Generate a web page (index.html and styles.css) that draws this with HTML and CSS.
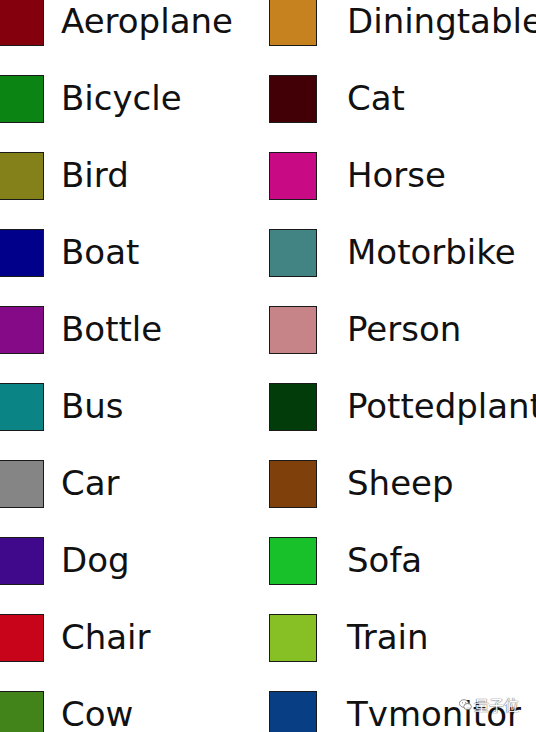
FILE: index.html
```html
<!DOCTYPE html>
<html>
<head>
<meta charset="utf-8">
<link rel="stylesheet" href="styles.css">
</head>
<body>
<div class="legend">
  <span class="sw c-aeroplane"></span><span class="lbl">Aeroplane</span>
  <span class="sw c-diningtable"></span><span class="lbl lbl-r">Diningtable</span>

  <span class="sw c-bicycle"></span><span class="lbl">Bicycle</span>
  <span class="sw c-cat"></span><span class="lbl lbl-r">Cat</span>

  <span class="sw c-bird"></span><span class="lbl">Bird</span>
  <span class="sw c-horse"></span><span class="lbl lbl-r">Horse</span>

  <span class="sw c-boat"></span><span class="lbl">Boat</span>
  <span class="sw c-motorbike"></span><span class="lbl lbl-r">Motorbike</span>

  <span class="sw c-bottle"></span><span class="lbl">Bottle</span>
  <span class="sw c-person"></span><span class="lbl lbl-r">Person</span>

  <span class="sw c-bus"></span><span class="lbl">Bus</span>
  <span class="sw c-pottedplant"></span><span class="lbl lbl-r">Pottedplant</span>

  <span class="sw c-car"></span><span class="lbl">Car</span>
  <span class="sw c-sheep"></span><span class="lbl lbl-r">Sheep</span>

  <span class="sw c-dog"></span><span class="lbl">Dog</span>
  <span class="sw c-sofa"></span><span class="lbl lbl-r">Sofa</span>

  <span class="sw c-chair"></span><span class="lbl">Chair</span>
  <span class="sw c-train"></span><span class="lbl lbl-r">Train</span>

  <span class="sw c-cow"></span><span class="lbl">Cow</span>
  <span class="sw c-tvmonitor"></span><span class="lbl lbl-r">Tvmonitor</span>
</div>
<div class="watermark">
  <svg class="wm-icon" width="13" height="12" viewBox="0 0 13 12">
    <ellipse cx="5" cy="4.5" rx="4.6" ry="3.8" fill="#fff" stroke="#666" stroke-width="0.8"/>
    <ellipse cx="8.6" cy="7.6" rx="3.8" ry="3.1" fill="#fff" stroke="#666" stroke-width="0.8"/>
    <circle cx="3.5" cy="3.8" r="0.6" fill="#666"/>
    <circle cx="6.5" cy="3.8" r="0.6" fill="#666"/>
  </svg>
  <span class="wm-text">量子位</span>
</div>
</body>
</html>
```
FILE: styles.css
```css
html, body {
  margin: 0;
  padding: 0;
  background: #ffffff;
  overflow: hidden;
  width: 536px;
  height: 732px;
}

body {
  position: relative;
  font-family: "DejaVu Sans", "Noto Sans", sans-serif;
  color: #111111;
}

.legend {
  display: grid;
  grid-template-columns: 48px 225px 48px 1fr;
  grid-auto-rows: 48px;
  row-gap: 29px;
  margin-left: -4px;
  margin-top: -2px;
}

.sw {
  box-sizing: border-box;
  border: 1px solid #1a1a1a;
  width: 48px;
  height: 48px;
}

.lbl {
  font-size: 34px;
  line-height: 46px;
  height: 46px;
  padding-left: 17px;
  white-space: nowrap;
  align-self: start;
}

.lbl-r {
  padding-left: 30px;
}

.c-aeroplane { background: #84000c; }
.c-bicycle { background: #0c8414; }
.c-bird { background: #84801a; }
.c-boat { background: #00008a; }
.c-bottle { background: #840a88; }
.c-bus { background: #0a8484; }
.c-car { background: #858585; }
.c-dog { background: #40088a; }
.c-chair { background: #c8041a; }
.c-cow { background: #42841a; }
.c-diningtable { background: #c6821e; }
.c-cat { background: #420006; }
.c-horse { background: #c80a84; }
.c-motorbike { background: #428484; }
.c-person { background: #c68488; }
.c-pottedplant { background: #023c0a; }
.c-sheep { background: #80400c; }
.c-sofa { background: #18c02a; }
.c-train { background: #86c024; }
.c-tvmonitor { background: #083e84; }

.watermark {
  position: absolute;
  left: 459px;
  top: 697px;
  display: flex;
  align-items: center;
  gap: 2px;
  opacity: 0.9;
}

.wm-text {
  font-family: "Noto Sans CJK SC", sans-serif;
  font-size: 15px;
  line-height: 16px;
  color: #ffffff;
  text-shadow: 0 0 1px #444, 0 0 1px #444;
}
```
